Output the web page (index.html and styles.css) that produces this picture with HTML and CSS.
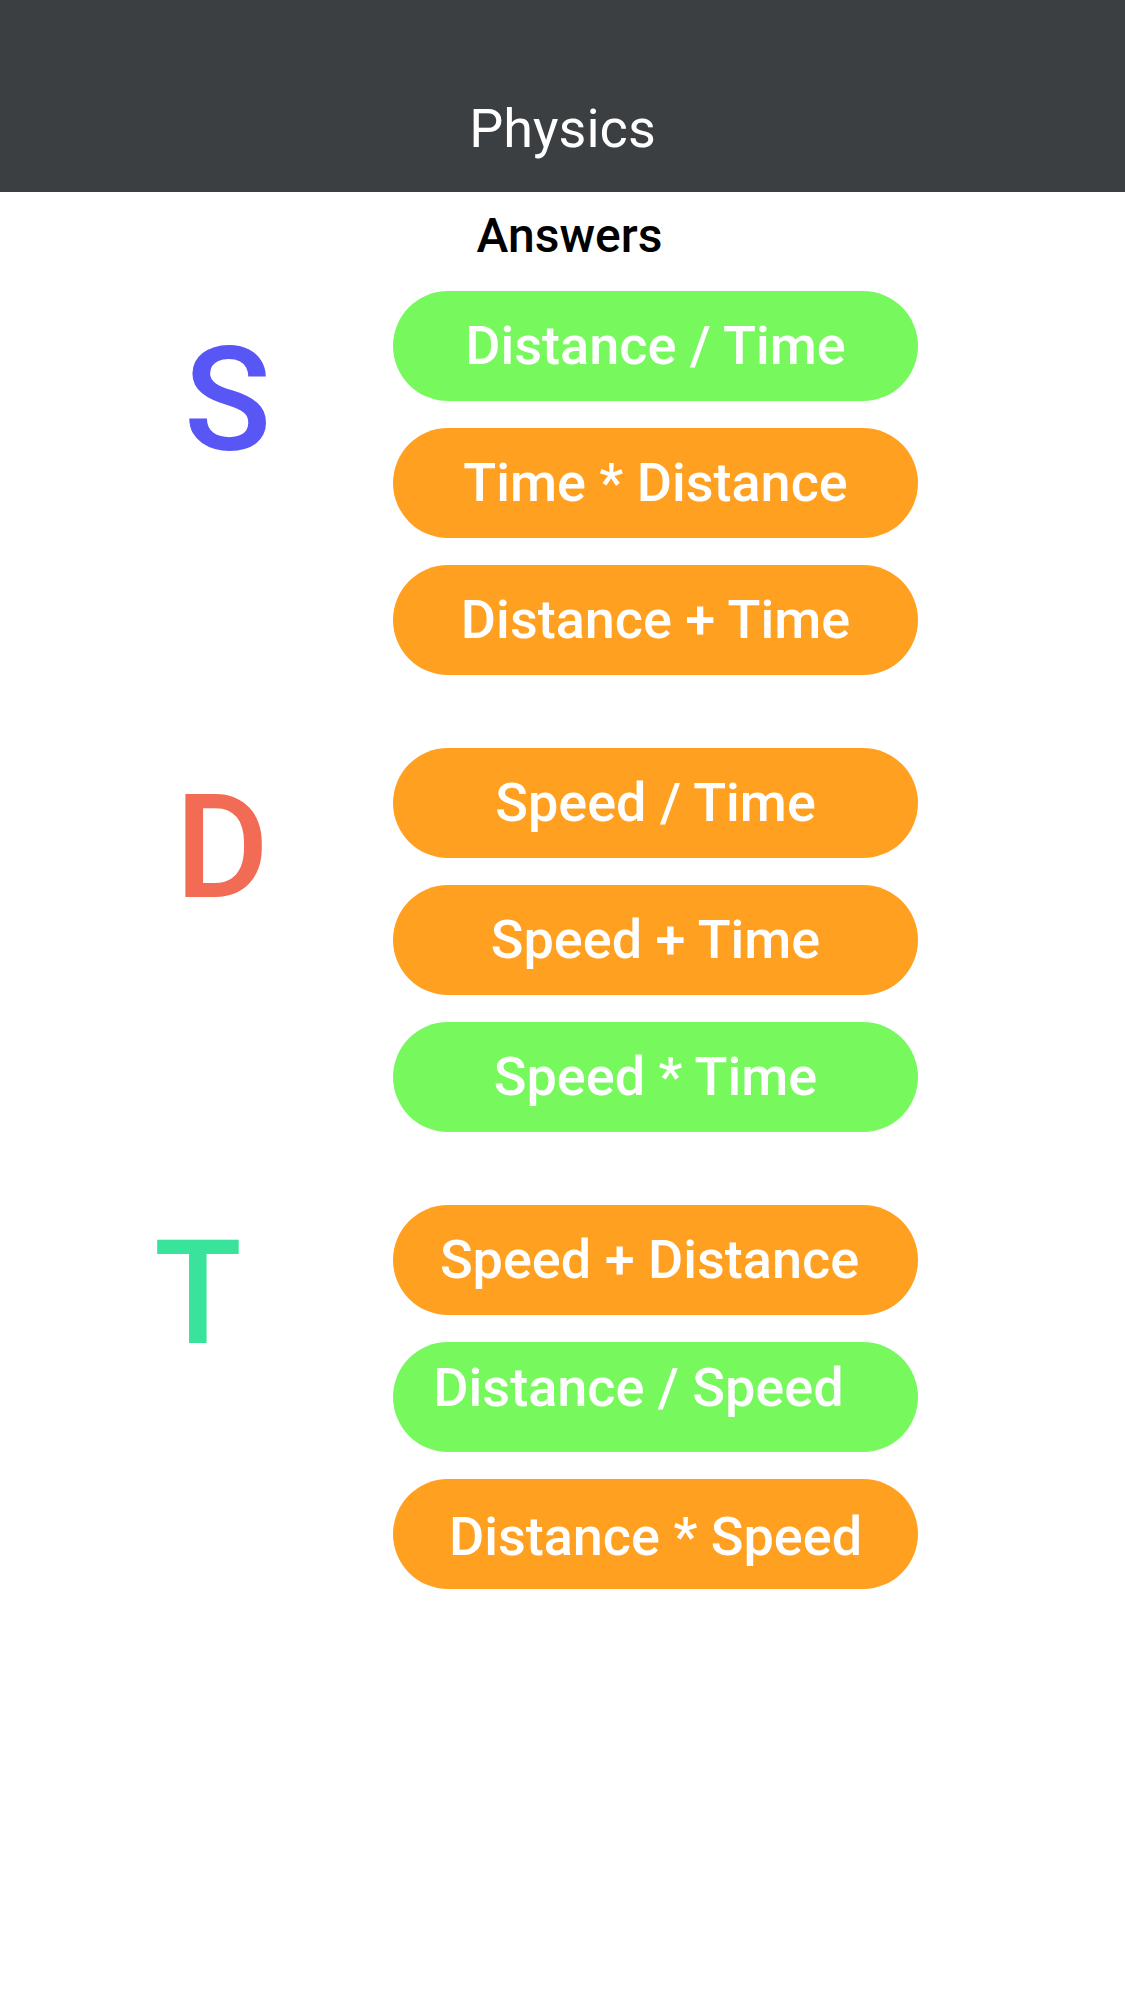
FILE: index.html
```html
<!DOCTYPE html>
<html lang="en">
<head>
<meta charset="utf-8">
<title>Physics</title>
<link rel="stylesheet" href="styles.css">
</head>
<body>
<header class="appbar">
  <h1 class="appbar-title">Physics</h1>
</header>
<main class="content">
  <h2 class="answers">Answers</h2>
  <div class="groups">
    <section class="group">
      <div class="letter letter-s">S</div>
      <div class="options">
        <div class="pill pill-green">Distance / Time</div>
        <div class="pill pill-orange">Time * Distance</div>
        <div class="pill pill-orange">Distance + Time</div>
      </div>
    </section>
    <section class="group">
      <div class="letter letter-d">D</div>
      <div class="options">
        <div class="pill pill-orange">Speed / Time</div>
        <div class="pill pill-orange">Speed + Time</div>
        <div class="pill pill-green">Speed * Time</div>
      </div>
    </section>
    <section class="group">
      <div class="letter letter-t">T</div>
      <div class="options">
        <div class="pill pill-orange pill-shift-sm">Speed + Distance</div>
        <div class="pill pill-green pill-shift">Distance / Speed</div>
        <div class="pill pill-orange pill-low">Distance * Speed</div>
      </div>
    </section>
  </div>
</main>
</body>
</html>
```

FILE: styles.css
```css
* {
  box-sizing: border-box;
}

html, body {
  margin: 0;
  padding: 0;
  background: #ffffff;
  font-family: Roboto, "Noto Sans", "Liberation Sans", sans-serif;
}

.appbar {
  height: 192px;
  background: #3b3f42;
  padding-top: 102px;
}

.appbar-title {
  margin: 0;
  font-size: 54px;
  line-height: 1;
  font-weight: 400;
  color: #ffffff;
  text-align: center;
}

.content {
  display: flex;
  flex-direction: column;
}

.answers {
  margin: 20px 0 0 0;
  padding-left: 14px;
  font-size: 48px;
  line-height: 1;
  font-weight: 500;
  color: #000000;
  text-align: center;
}

.groups {
  margin-top: 31px;
  display: flex;
  flex-direction: column;
  gap: 73px;
}

.group {
  display: flex;
  align-items: flex-start;
}

.letter {
  width: 393px;
  flex: none;
  font-size: 144px;
  line-height: 1;
  font-weight: 500;
}

.letter-s {
  color: #5856f5;
  padding-top: 38px;
  padding-left: 184px;
}

.letter-d {
  color: #f26b55;
  padding-top: 28px;
  padding-left: 175px;
}

.letter-t {
  color: #3ae39b;
  padding-top: 17px;
  padding-left: 154px;
}

.options {
  display: flex;
  flex-direction: column;
  gap: 27px;
}

.pill {
  width: 525px;
  height: 110px;
  border-radius: 55px;
  display: flex;
  align-items: center;
  justify-content: center;
  font-size: 54px;
  line-height: 1;
  font-weight: 500;
  color: #ffffff;
  white-space: nowrap;
}

.pill-green {
  background: #77f95e;
}

.pill-orange {
  background: #ffa020;
}

.pill-shift-sm {
  padding-right: 12px;
}

.pill-shift {
  padding-right: 34px;
  padding-bottom: 18px;
}

.pill-low {
  padding-top: 6px;
}
```
